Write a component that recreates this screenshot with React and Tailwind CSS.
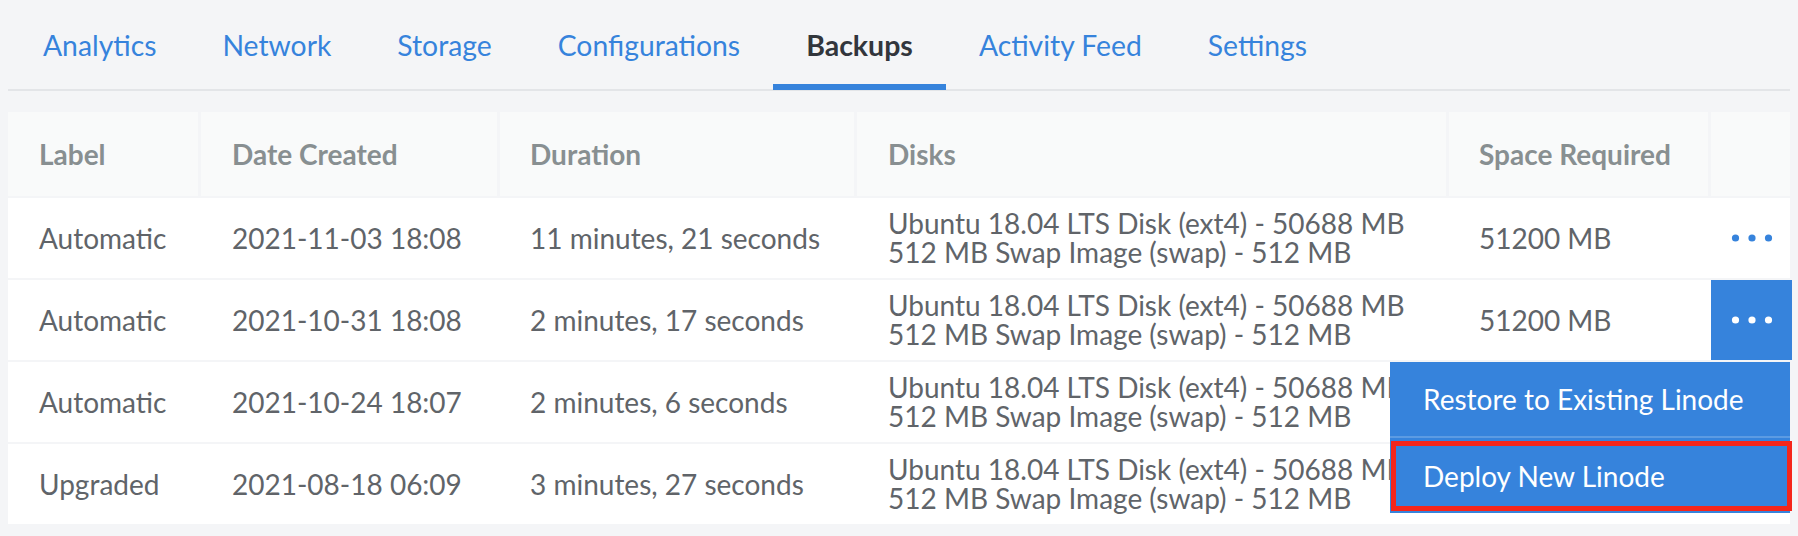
import React from 'react';

const tabs = ['Analytics', 'Network', 'Storage', 'Configurations', 'Backups', 'Activity Feed', 'Settings'];

const backups = [
  { label: 'Automatic', created: '2021-11-03 18:08', duration: '11 minutes, 21 seconds', space: '51200 MB' },
  { label: 'Automatic', created: '2021-10-31 18:08', duration: '2 minutes, 17 seconds', space: '51200 MB' },
  { label: 'Automatic', created: '2021-10-24 18:07', duration: '2 minutes, 6 seconds', space: '51200 MB' },
  { label: 'Upgraded', created: '2021-08-18 06:09', duration: '3 minutes, 27 seconds', space: '51200 MB' },
];

function Dots({ className }) {
  return (
    <svg className={className} width="42" height="8" viewBox="0 0 42 8" fill="currentColor">
      <circle cx="4.5" cy="4" r="3.6" />
      <circle cx="21" cy="4" r="3.6" />
      <circle cx="37.5" cy="4" r="3.6" />
    </svg>
  );
}

export default function App() {
  return (
    <div className="w-[1798px] h-[536px] overflow-hidden bg-[#f4f5f7] font-['Lato','Noto_Sans',sans-serif]">
      {/* Tabs */}
      <nav className="mx-2 flex h-[91px] border-b-2 border-[#e3e5e8] pl-[2px]">
        {tabs.map((tab) => {
          const active = tab === 'Backups';
          return (
            <div
              key={tab}
              className={
                active
                  ? 'relative flex h-[89px] items-center px-[33px] pt-[2px] text-[28.5px] font-bold text-[#32363c]'
                  : 'relative flex h-[89px] items-center px-[33px] pt-[2px] text-[28.3px] text-[#3683dc]'
              }
            >
              {tab}
              {active && <span className="absolute -bottom-[1px] left-0 right-0 h-[6px] bg-[#3683dc]" />}
            </div>
          );
        })}
      </nav>

      {/* Backups table */}
      <div className="relative mx-2 mt-[21px]">
        <div className="grid h-[84px] grid-cols-[193px_299px_357px_592px_262px_81px] bg-[#f9fafa] text-[28px] font-bold text-[#888f91]">
          <div className="flex items-center border-r-[3px] border-[#f4f5f7] pl-[31px]">Label</div>
          <div className="flex items-center border-r-[3px] border-[#f4f5f7] pl-[31px]">Date Created</div>
          <div className="flex items-center border-r-[3px] border-[#f4f5f7] pl-[30px]">Duration</div>
          <div className="flex items-center border-r-[3px] border-[#f4f5f7] pl-[31px]">Disks</div>
          <div className="flex items-center border-r-[3px] border-[#f4f5f7] pl-[30px]">Space Required</div>
          <div />
        </div>

        {backups.map((b, i) => (
          <div
            key={b.created}
            className="grid h-[82px] grid-cols-[193px_299px_357px_592px_262px_81px] border-t-2 border-[#f4f5f7] bg-white text-[28px] text-[#606469]"
          >
            <div className="flex items-center pl-[31px]">{b.label}</div>
            <div className="flex items-center pl-[31px]">{b.created}</div>
            <div className="flex items-center pl-[30px]">{b.duration}</div>
            <div className="flex flex-col justify-center pl-[31px] leading-[29px]">
              <span>Ubuntu 18.04 LTS Disk (ext4) - 50688 MB</span>
              <span>512 MB Swap Image (swap) - 512 MB</span>
            </div>
            <div className="flex items-center pl-[30px]">{b.space}</div>
            <div className={i === 1 ? 'flex items-center justify-center bg-[#3683dc] text-white' : 'flex items-center justify-center text-[#3683dc]'}>
              <Dots />
            </div>
          </div>
        ))}

        {/* Open action menu */}
        <div className="absolute right-0 top-[250px] w-[400px] bg-[#3683dc] text-[28px] text-white">
          <div className="flex h-[76px] items-center border-b-2 border-[#5c9be3] px-[33px]">Restore to Existing Linode</div>
          <div className="relative flex h-[75px] items-center px-[33px]">
            Deploy New Linode
            <span className="absolute -right-[2px] left-[1px] top-[3px] bottom-[2px] border-[5px] border-[#f5261b]" />
          </div>
        </div>
      </div>
    </div>
  );
}
